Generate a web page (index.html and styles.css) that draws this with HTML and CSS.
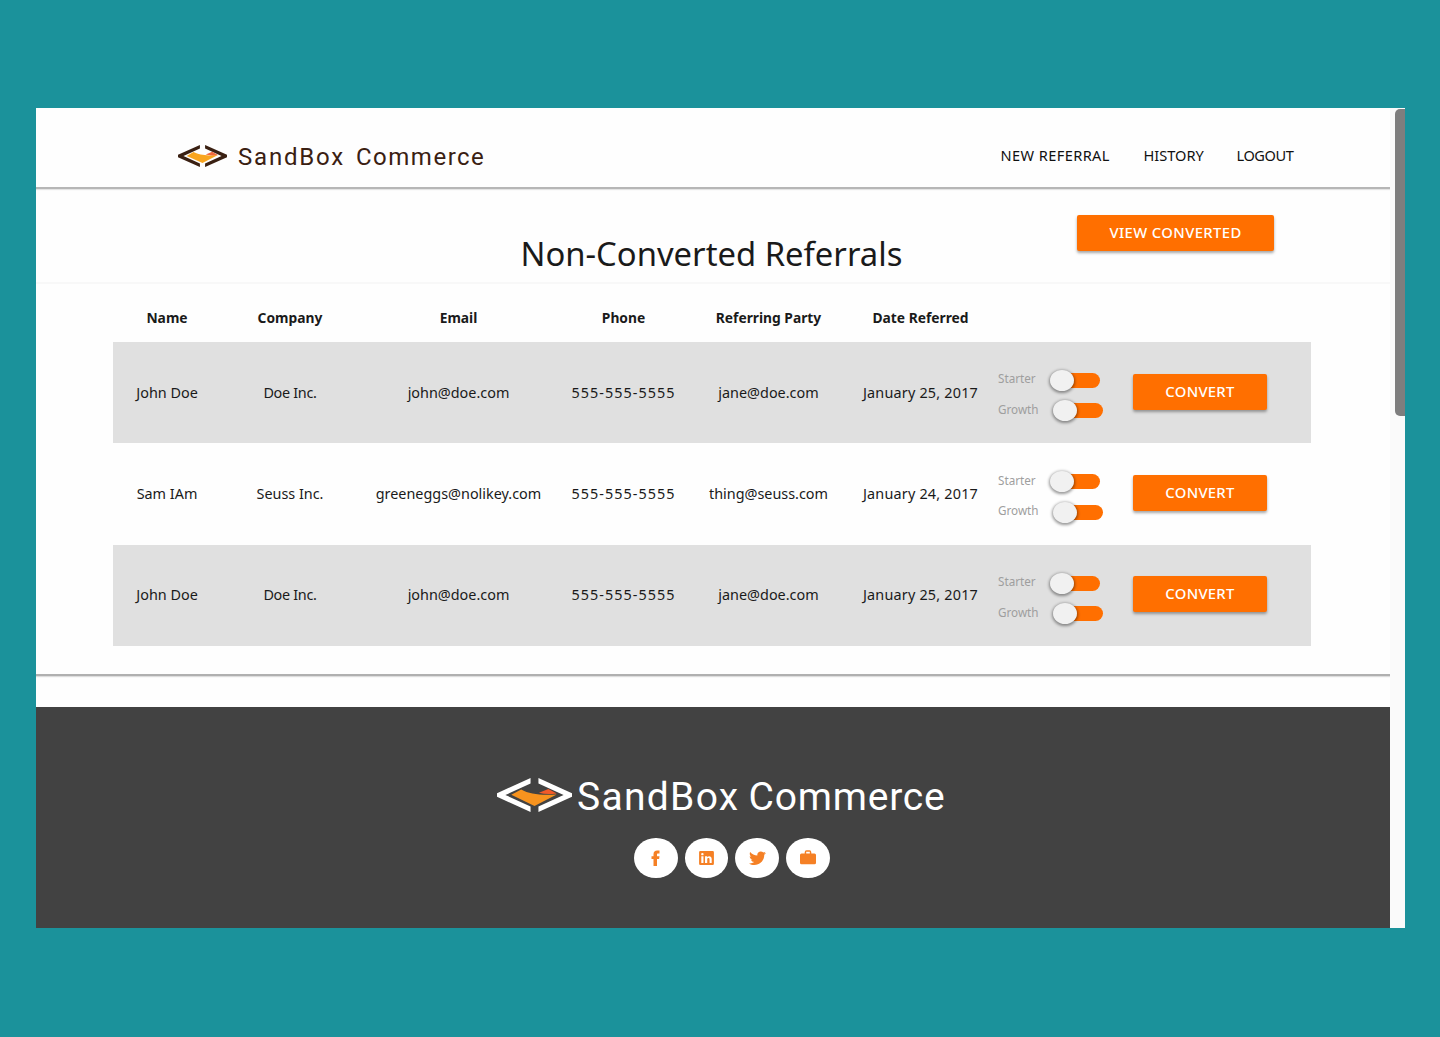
FILE: index.html
```html
<!DOCTYPE html>
<html lang="en">
<head>
<meta charset="utf-8">
<title>SandBox Commerce - Non-Converted Referrals</title>
<link rel="stylesheet" href="styles.css">
</head>
<body>
<div class="window">
  <div class="page">
    <header class="header">
      <a class="brand">
        <svg class="brand-mark" width="49" height="22" viewBox="0 0 76 34" preserveAspectRatio="none">
          <path fill="#3a2012" d="M34 0V5.500L8.500 17 34 28.500V34L0 18.800V15.200ZM42 0V5.500L67.500 17 42 28.500V34L76 18.800V15.200Z"/>
          <path fill="#f9a51f" d="M24 11C34 15.500 42 17 62 15.500L38 28 13.500 17Z"/>
          <path fill="#f26a3d" d="M43 14.500L53 10.500 62 15.500Q52 17 43 14.500Z"/>
        </svg>
        <span class="word word-a">SandBox</span><span class="word word-b">Commerce</span>
      </a>
      <nav class="nav">
        <a class="nav-new">NEW REFERRAL</a><a class="nav-history">HISTORY</a><a class="nav-logout">LOGOUT</a>
      </nav>
    </header>
    <section class="title-bar">
      <h1 class="title">Non-Converted Referrals</h1>
      <button class="btn btn-view">VIEW CONVERTED</button>
    </section>
    <main class="referrals">
      <div class="row head">
        <span>Name</span><span>Company</span><span>Email</span><span>Phone</span><span>Referring Party</span><span>Date Referred</span>
      </div>
      <div class="row shaded">
        <span>John Doe</span><span class="tight">Doe Inc.</span><span>john@doe.com</span><span class="phone">555-555-5555</span><span>jane@doe.com</span><span class="date">January 25, 2017</span>
        <div class="plans">
          <label class="plan">Starter<i class="switch"></i></label>
          <label class="plan">Growth<i class="switch"></i></label>
        </div>
        <button class="btn">CONVERT</button>
      </div>
      <div class="row">
        <span>Sam IAm</span><span>Seuss Inc.</span><span>greeneggs@nolikey.com</span><span class="phone">555-555-5555</span><span>thing@seuss.com</span><span class="date">January 24, 2017</span>
        <div class="plans">
          <label class="plan">Starter<i class="switch"></i></label>
          <label class="plan">Growth<i class="switch"></i></label>
        </div>
        <button class="btn">CONVERT</button>
      </div>
      <div class="row shaded">
        <span>John Doe</span><span class="tight">Doe Inc.</span><span>john@doe.com</span><span class="phone">555-555-5555</span><span>jane@doe.com</span><span class="date">January 25, 2017</span>
        <div class="plans">
          <label class="plan">Starter<i class="switch"></i></label>
          <label class="plan">Growth<i class="switch"></i></label>
        </div>
        <button class="btn">CONVERT</button>
      </div>
    </main>
    <footer class="footer">
      <div class="brand-large">
        <svg class="brand-mark" width="75" height="34" viewBox="0 0 76 34" preserveAspectRatio="none">
          <path fill="#fff" d="M34 0V5.500L8.500 17 34 28.500V34L0 18.800V15.200ZM42 0V5.500L67.500 17 42 28.500V34L76 18.800V15.200Z"/>
          <path fill="#f7931e" d="M24.500 11.500C33 16.200 44 17.500 60.500 16.500L38 28 14.500 16.800Z"/>
          <path fill="#f15a29" d="M42.500 14.800L52 11 60.500 15.500Q50 17 42.500 14.800Z"/>
        </svg>
        <span class="word word-a">SandBox</span><span class="word word-b">Commerce</span>
      </div>
      <div class="social">
        <a class="disc"><svg width="16" height="16" viewBox="0 0 16 16"><path d="M5.500 16V9H3.500V6.300H5.500V4.200C5.500 1.700 6.900.5 9.200.5H11.500V3.400H10.100C9.300 3.400 9 3.700 9 4.400V6.300H11.500L11.100 9H9V16Z"/></svg></a>
        <a class="disc"><svg width="15" height="14" viewBox="0 0 18 17"><path fill-rule="evenodd" d="M1.500 0H16.500Q18 0 18 1.500V15.500Q18 17 16.500 17H1.500Q0 17 0 15.500V1.500Q0 0 1.500 0ZM2.700 6.500V14.500H5.300V6.500ZM4 2.300A1.500 1.500 0 1 0 4 5.300 1.500 1.500 0 1 0 4 2.300ZM7.200 6.500V14.500H9.900V10.200C9.900 8 12.700 8 12.700 10.200V14.500H15.300V9.600C15.300 6 11.500 5.400 9.900 7.600V6.500Z"/></svg></a>
        <a class="disc"><svg width="17" height="14" viewBox="1.500 3.500 21 17.500" preserveAspectRatio="none"><path d="M22.460 6c-.770.350-1.600.580-2.460.690.880-.530 1.560-1.370 1.880-2.380-.830.500-1.750.850-2.720 1.050C18.370 4.500 17.260 4 16 4c-2.350 0-4.270 1.920-4.270 4.290 0 .340.040.670.110.980C8.280 9.090 5.110 7.380 3 4.790c-.370.630-.580 1.370-.580 2.150 0 1.490.750 2.810 1.910 3.560-.710 0-1.370-.2-1.950-.5v.030c0 2.080 1.480 3.820 3.440 4.210a4.220 4.220 0 0 1-1.930.070 4.280 4.280 0 0 0 4 2.980 8.521 8.521 0 0 1-5.330 1.840c-.340 0-.680-.020-1.020-.060C3.440 20.290 5.700 21 8.120 21 16 21 20.330 14.460 20.330 8.790c0-.190 0-.370-.010-.560.840-.6 1.560-1.360 2.140-2.230z"/></svg></a>
        <a class="disc disc-work"><svg width="16" height="15" viewBox="0 0 16 15"><path fill-rule="evenodd" d="M4.700 3.500V2.300Q4.700 .3 6.500.3H9.500Q11.300 .3 11.300 2.300V3.500H14.500Q16 3.500 16 5V12.800Q16 14.300 14.500 14.300H1.500Q0 14.300 0 12.800V5Q0 3.500 1.500 3.500ZM6.200 3.500H9.800V1.700H6.200Z"/></svg></a>
      </div>
    </footer>
  </div>
  <div class="scrollbar"><div class="thumb"></div></div>
</div>
</body>
</html>
```
FILE: styles.css
```css
* { box-sizing: border-box; }
body {
  margin: 0;
  height: 1037px;
  padding: 108px 35px 0 36px;
  background: #1b929b;
  color: #1a1a1a;
  font-family: "Noto Sans", "Open Sans", sans-serif;
  font-size: 14.4px;
  overflow: hidden;
}
.window { display: flex; height: 820px; background: #fefefe; overflow: hidden; }
.page { width: 1354px; display: flex; flex-direction: column; }
.scrollbar { width: 15px; padding: 1px 0 0 5px; background: #fafafa; }
.thumb { height: 307px; background: #7e7e7e; border-radius: 5px 0 0 5px; }

.header {
  height: 81px;
  padding: 17px 96px 0 142px;
  display: flex;
  align-items: center;
  justify-content: space-between;
  border-bottom: 2px solid #b6b6b6;
  box-shadow: 0 1px 1px #e4e4e4;
}
.brand { display: flex; align-items: center; color: #3a2012; }
.brand-mark { flex: none; }
.word { font-family: Roboto, sans-serif; white-space: nowrap; }
.brand .word { margin-top: 2px; font-size: 24px; line-height: 28px; }
.brand .word-a { margin-left: 11px; letter-spacing: 1.8px; }
.brand .word-b { margin-left: 11px; letter-spacing: 1.5px; }
.nav { display: flex; margin: 0 0 2px; color: #111; font-size: 14.6px; line-height: 20px; }
.nav-new { width: 143px; letter-spacing: .4px; }
.nav-history { width: 93px; }
.nav-logout { width: 57.500px; letter-spacing: -.45px; }

.title-bar {
  height: 95px;
  padding: 26px 116px 0 484.500px;
  display: flex;
  justify-content: space-between;
  align-items: flex-start;
  border-bottom: 2px solid #f8f8f8;
}
.title { margin: 17px 0 0; font-size: 32.8px; font-weight: 400; line-height: 44px; white-space: nowrap; }
.btn {
  width: 134px;
  height: 36px;
  padding: 0 0 2px;
  border: 0;
  border-radius: 2px;
  background: #ff6f00;
  color: #fff;
  box-shadow: 0 2px 3px rgba(0, 0, 0, .35);
  font: 500 14.8px/20px "Noto Sans", sans-serif;
  letter-spacing: .3px;
}
.row .btn { margin: 0 0 2px 1px; }
.btn-view { width: 197px; letter-spacing: .4px; }

.referrals { height: 392px; padding: 9px 79px 0 77px; border-bottom: 2px solid #b0b0b0; box-shadow: 0 1px 1px #ddd; }
.row {
  display: grid;
  grid-template-columns: 108px 138px 199px 131px 159px 145px 139px 135px;
  align-items: center;
  height: 101.4px;
}
.row > span { text-align: center; white-space: nowrap; }
.row:not(.head) > span { padding-bottom: 1px; }
.head { height: 49px; font-size: 13.8px; font-weight: 700; }
.shaded { background: #e0e0e0; }
.tight { letter-spacing: -.3px; }
.phone { letter-spacing: 1.05px; }
.date { letter-spacing: .2px; }
.plans { padding: 4px 0 0 5px; display: grid; gap: 9.500px; }
.plan { display: flex; align-items: center; gap: 14px; height: 21px; padding-bottom: 2px; color: #9e9e9e; font-size: 11.7px; }
.switch { width: 50px; height: 21px; margin-top: 4px; display: flex; align-items: center; }
.switch::before {
  content: "";
  flex: none;
  width: 24px;
  height: 21px;
  border-radius: 50%;
  background: #f1f1f1;
  box-shadow: 0 1px 3px 1px rgba(0, 0, 0, .4);
  z-index: 1;
}
.switch::after { content: ""; height: 15px; flex: 1; margin-left: -10px; border-radius: 8px; background: #ff6f00; }

.footer {
  flex: 1;
  margin-top: 31px;
  padding-top: 69px;
  background: #424242;
}
.brand-large { display: flex; align-items: center; height: 38px; padding-left: 461px; color: #fff; }
.brand-large .word { font-size: 39px; font-weight: 400; line-height: 46px; }
.brand-large .word-a { margin: 3px 0 0 5px; letter-spacing: 1.3px; }
.brand-large .word-b { margin: 3px 0 0 9px; letter-spacing: .8px; }
.social { display: flex; gap: 7.200px; margin-top: 24px; padding-left: 598px; }
.disc { width: 43.500px; height: 40px; border-radius: 50%; background: #fff; display: grid; place-items: center; fill: #f58025; }
.disc-work { padding-bottom: 2px; }
```
